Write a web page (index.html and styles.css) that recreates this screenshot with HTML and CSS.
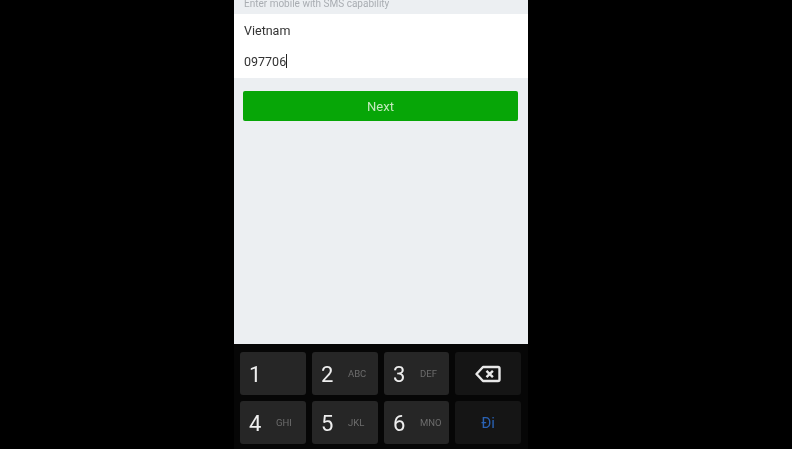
FILE: index.html
```html
<!DOCTYPE html>
<html lang="en">
<head>
  <meta charset="UTF-8">
  <meta name="viewport" content="width=device-width, initial-scale=1.0">
  <title>Enter mobile</title>
  <link rel="stylesheet" href="styles.css">
</head>
<body>

  <div class="phone">
    <div class="hint">Enter mobile with SMS capability</div>

    <div class="form">
      <div class="field">Vietnam</div>
      <div class="field">097706<span class="caret"></span></div>
    </div>

    <div class="actions">
      <button class="next-button">Next</button>
    </div>

    <div class="keyboard">
      <div class="key"><span class="digit">1</span></div>
      <div class="key"><span class="digit">2</span><span class="letters">ABC</span></div>
      <div class="key"><span class="digit">3</span><span class="letters">DEF</span></div>
      <div class="key key-dark">
        <svg class="backspace" width="26" height="18" viewBox="0 0 26 18">
          <path d="M8 2h15a1.500 1.500 0 0 1 1.500 1.500v11a1.500 1.500 0 0 1-1.500 1.500H8L1.500 9z" fill="none" stroke="#e8e8e8" stroke-width="2.400" stroke-linejoin="round"/>
          <path d="M11.500 5.800l6.400 6.400M17.900 5.800l-6.400 6.400" stroke="#e8e8e8" stroke-width="2.400"/>
        </svg>
      </div>
      <div class="key"><span class="digit">4</span><span class="letters">GHI</span></div>
      <div class="key"><span class="digit">5</span><span class="letters">JKL</span></div>
      <div class="key"><span class="digit">6</span><span class="letters">MNO</span></div>
      <div class="key key-dark"><span class="go">Đi</span></div>
    </div>
  </div>

</body>
</html>
```

FILE: styles.css
```css
body {
  font-family: Roboto, "Liberation Sans", sans-serif;
  background-color: #000;
  margin: 0;
  height: 449px;
  overflow: hidden;
  padding-left: 234px;
}

.phone {
  width: 294px;
  height: 449px;
  background-color: #eceff2;
  display: flex;
  flex-direction: column;
  filter: blur(0.5px);
}

.hint {
  height: 14px;
  padding-left: 10px;
  font-size: 10px;
  line-height: 8px;
  color: #a9adb2;
  overflow: hidden;
}

.form {
  height: 64px;
  padding-left: 10px;
  background-color: #fff;
}

.field {
  height: 30px;
  display: flex;
  align-items: center;
  font-size: 12.500px;
  color: #333;
}

.field:first-child {
  height: 32px;
}

.caret {
  width: 1px;
  height: 14px;
  background-color: #222;
}

.actions {
  flex: 1;
  padding: 13px 10px 0 9px;
}

.next-button {
  width: 100%;
  height: 30px;
  border: none;
  border-radius: 2px;
  background-color: #07a607;
  color: #c4e8bd;
  font-family: inherit;
  font-size: 13px;
  padding: 0;
}

.keyboard {
  height: 105px;
  padding: 8px 0 0 6px;
  box-sizing: border-box;
  background-color: #060606;
  display: grid;
  grid-template-columns: 66px 66px 65px 66px;
  grid-template-rows: 43px 43px;
  gap: 6px;
}

.key {
  background-color: #262626;
  border-radius: 3px;
  display: flex;
  align-items: center;
  color: #eee;
}

.key-dark {
  background-color: #151515;
  justify-content: center;
}

.digit {
  width: 36px;
  padding: 1px 0 0 9px;
  box-sizing: border-box;
  font-size: 22px;
}

.letters {
  font-size: 9.500px;
  color: #6c6c6c;
}

.backspace {
  margin-right: 1px;
}

.go {
  font-size: 15px;
  color: #2a62b4;
}
```
